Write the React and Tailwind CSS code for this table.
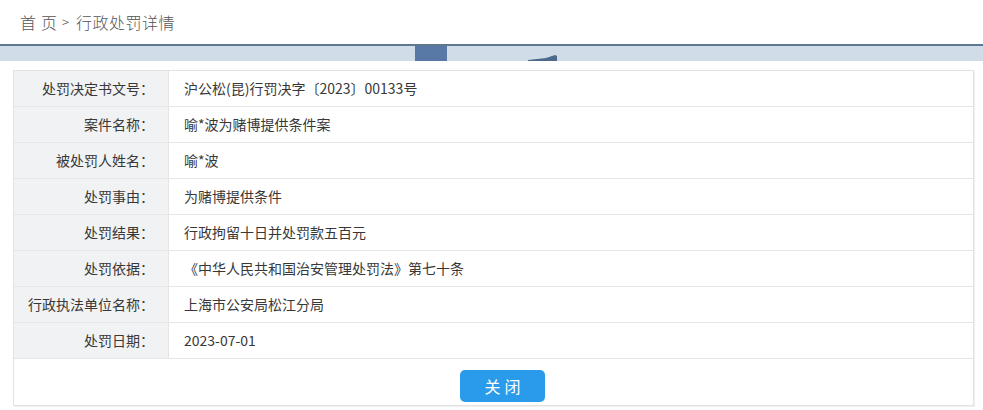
export default function App() {
  const rows = [
    ["处罚决定书文号：", "沪公松(昆)行罚决字〔2023〕00133号"],
    ["案件名称：", "喻*波为赌博提供条件案"],
    ["被处罚人姓名：", "喻*波"],
    ["处罚事由：", "为赌博提供条件"],
    ["处罚结果：", "行政拘留十日并处罚款五百元"],
    ["处罚依据：", "《中华人民共和国治安管理处罚法》第七十条"],
    ["行政执法单位名称：", "上海市公安局松江分局"],
    ["处罚日期：", "2023-07-01"],
  ];
  return (
    <div
      className="w-[983px] h-[410px] bg-white overflow-hidden text-[#383838]"
      style={{ fontFamily: '"Microsoft YaHei", "Noto Sans CJK SC", "Noto Sans", sans-serif' }}
    >
      <div className="h-[44px] flex items-center pl-[20px] pb-[1px] text-[16px] text-[#555] font-light">
        <span className="tracking-[5px]">首页</span>
        <span className="mr-[7px] text-[13px]">&gt;</span>
        <span className="tracking-[0.5px]">行政处罚详情</span>
      </div>
      <div className="h-[2px] bg-[#5d7890]" />
      <div className="h-[15px] bg-[#d0dde9] flex relative">
        <div className="ml-[415px] w-[32px] h-full bg-[#5878a6]" />
        <svg className="ml-[81px]" width="30" height="15" viewBox="0 0 30 15">
          <path d="M0 14 L18 12 L27 9 L29 10 L29 15 L0 15 Z" fill="#4d6a8a" />
        </svg>
      </div>
      <div className="pt-[9px] px-[13px]">
        <div className="w-[961px] border border-[#e2e2e2] shadow-[1px_1px_1px_rgba(0,0,0,0.06)]">
          {rows.map(([k, v], i) => (
            <div key={i} className="flex h-[36px] border-b border-[#e6e6e6] text-[14px]">
              <div className="w-[155px] shrink-0 bg-[#f1f2f3] border-r border-[#e4e4e4] flex items-center justify-end pr-[14px]">
                {k}
              </div>
              <div className="flex items-center pl-[15px]">{v}</div>
            </div>
          ))}
          <div className="h-[46px] flex items-center justify-center">
            <button className="ml-[18px] w-[85px] h-[32px] mt-[7px] rounded-[5px] bg-[#2a9bea] text-white text-[16px] tracking-[4px] pl-[4px]">
              关闭
            </button>
          </div>
        </div>
      </div>
    </div>
  );
}
